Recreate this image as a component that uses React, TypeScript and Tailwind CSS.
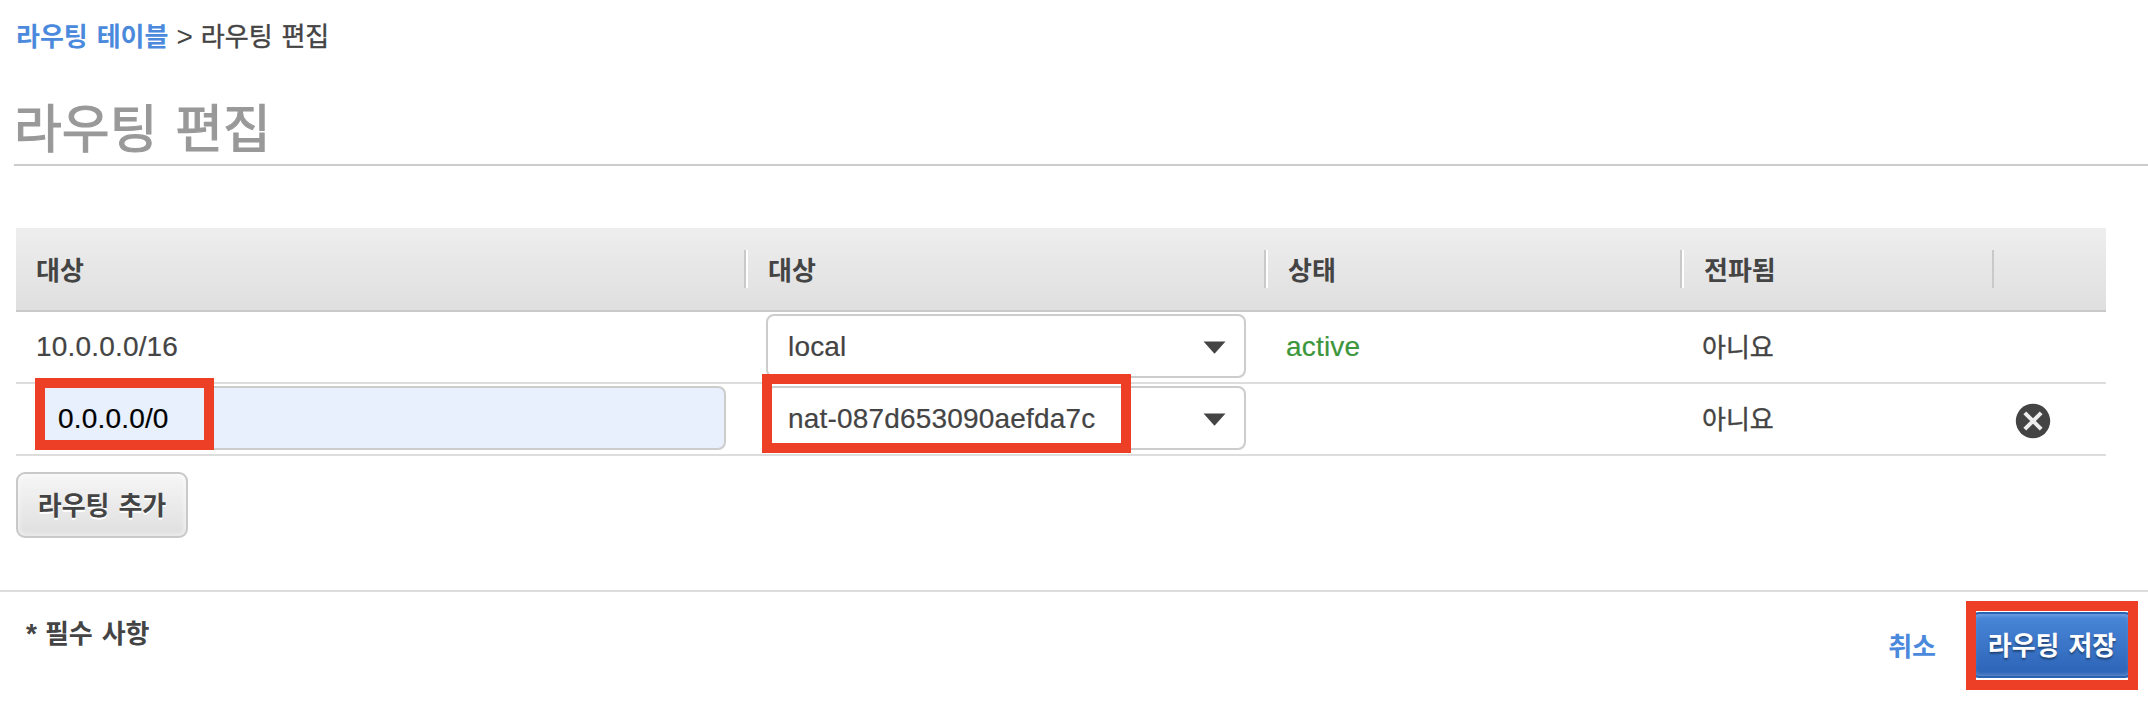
import type { ReactNode } from "react";

const korean = "font-['Noto_Sans_CJK_KR','Liberation_Sans',sans-serif] text-[26px] leading-[38px] [word-spacing:3px]";
const koreanRegular = `${korean} [-webkit-text-stroke:0.4px_currentColor]`;
const latin = "leading-8 tracking-[0.18px] [-webkit-text-stroke:0.2px_currentColor]";

function HeaderLabel({ children }: { children: ReactNode }) {
  return <span className={`${korean} pb-px font-bold`}>{children}</span>;
}

function Separator({ last }: { last?: boolean }) {
  return (
    <div className={`h-[38px] w-1 border-l-2 border-[#c9c9c9] ${last ? "" : "bg-white"}`} />
  );
}

function Select({ value }: { value: string }) {
  return (
    <div className="flex h-16 w-[480px] items-center justify-between rounded-lg border-2 border-[#ccc] bg-white pl-5 pr-[18px]">
      <span className={`${latin} pt-[2px]`}>{value}</span>
      <svg width="23" height="13" viewBox="0 0 23 13" className="mt-[2px]">
        <path d="M0.5 0.5H22.5L11.5 12.8Z" fill="#444" />
      </svg>
    </div>
  );
}

function Highlight({ className }: { className: string }) {
  return <div className={`pointer-events-none absolute border-[#ec3f25] ${className}`} />;
}

const columns = "grid grid-cols-[728px_520px_416px_312px_114px]";

export default function App() {
  return (
    <div className="relative h-[718px] w-[2148px] overflow-hidden bg-white font-['Liberation_Sans','Noto_Sans_CJK_KR',sans-serif] text-[28px] text-[#444]">
      <nav className="flex h-[72px] items-center pb-[2px] pl-4">
        <a className={`${korean} font-bold text-[#4a89dc]`}>라우팅 테이블</a>
        <span className="px-2 pt-1 leading-8">&gt;</span>
        <span className={koreanRegular}>라우팅 편집</span>
      </nav>

      <h1 className="ml-[14px] flex h-[94px] items-end border-b-2 border-[#ccc] pb-[2px] font-['Noto_Sans_CJK_KR',sans-serif] text-[52px] leading-[72px] text-[#999] [-webkit-text-stroke:1.1px_currentColor] [word-spacing:6px]">
        라우팅 편집
      </h1>

      <section className="ml-4 mt-[62px] w-[2090px]">
        <div className={`${columns} h-[84px] items-center border-b-2 border-[#c9c9c9] bg-linear-to-b from-[#eee] to-[#dfdfdf]`}>
          <div className="flex items-center pl-5"><HeaderLabel>대상</HeaderLabel></div>
          <div className="flex items-center gap-5"><Separator /><HeaderLabel>대상</HeaderLabel></div>
          <div className="flex items-center gap-5"><Separator /><HeaderLabel>상태</HeaderLabel></div>
          <div className="flex items-center gap-5"><Separator /><HeaderLabel>전파됨</HeaderLabel></div>
          <div className="flex items-center"><Separator last /></div>
        </div>

        <div className={`${columns} h-[72px] border-b-2 border-[#ddd]`}>
          <div className={`${latin} flex items-center pl-5`}>10.0.0.0/16</div>
          <div className="pl-[22px] pt-[2px]"><Select value="local" /></div>
          <div className={`${latin} flex items-center pl-[22px] text-[#3c963c]`}>active</div>
          <div className={`${koreanRegular} flex items-center pb-[3px] pl-[22px]`}>아니요</div>
          <div />
        </div>

        <div className={`${columns} h-[72px] border-b-2 border-[#ddd]`}>
          <div className="pl-5 pt-[2px]">
            <div className={`${latin} flex h-16 w-[690px] items-center rounded-lg border-2 border-[#ccc] bg-[#e8effd] pl-5 pt-[2px] text-black`}>
              0.0.0.0/0
            </div>
          </div>
          <div className="pl-[22px] pt-[2px]"><Select value="nat-087d653090aefda7c" /></div>
          <div />
          <div className={`${koreanRegular} flex items-center pb-[3px] pl-[22px]`}>아니요</div>
          <div className="flex items-center pl-[23px] pt-1">
            <svg width="36" height="36" viewBox="0 0 36 36">
              <circle cx="18" cy="18" r="17.2" fill="#444" />
              <path d="M9.8 9.8L26.2 26.2M26.2 9.8L9.8 26.2" stroke="#eee" strokeWidth="4" />
            </svg>
          </div>
        </div>

        <button className={`${korean} mt-4 flex h-[66px] w-[172px] items-center justify-center rounded-[9px] border-2 border-[#c9c9c9] bg-linear-to-b from-[#f6f6f6] to-[#dfdfdf] pb-[2px] font-bold shadow-[inset_0_0_4px_2px_rgba(255,255,255,0.45)] [text-shadow:0_2px_0_#fff]`}>
          라우팅 추가
        </button>
      </section>

      <footer className="mt-[52px] flex justify-between border-t-2 border-[#ddd]">
        <div className={`${korean} flex gap-2 pl-[26px] pt-[21px] font-bold`}>
          <span className="pt-[2px] font-['Liberation_Sans',sans-serif] text-[28px]">*</span>
          <span>필수 사항</span>
        </div>
        <div className="flex items-center pr-[15px] pt-5">
          <a className={`${korean} mr-[35px] font-bold text-[#4a89dc]`}>취소</a>
          <button className={`${korean} flex h-[66px] w-[162px] items-center justify-center rounded-lg border-2 border-[#2a62b2] bg-linear-to-b from-[#4a87d9] to-[#2c64b6] pb-[2px] font-bold text-white shadow-[inset_0_0_4px_1px_rgba(255,255,255,0.3)] [text-shadow:0_2px_2px_rgba(0,0,0,0.4)]`}>
            라우팅 저장
          </button>
        </div>
      </footer>

      <Highlight className="left-[35px] top-[378px] h-[72px] w-[179px] border-[10px]" />
      <Highlight className="left-[762px] top-[374px] h-[79px] w-[369px] border-[10px]" />
      <Highlight className="left-[1966px] top-[601px] h-[89px] w-[172px] border-[10px]" />
    </div>
  );
}
